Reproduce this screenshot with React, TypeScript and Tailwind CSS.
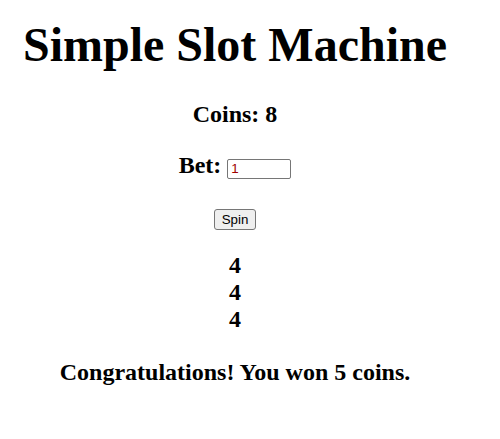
import { useState } from "react"

export default function App() {
  const [coins] = useState(8)
  const [bet, setBet] = useState("1")
  const reels = [4, 4, 4]

  return (
    <div className="w-[470px] bg-white text-center text-black font-['Liberation_Serif','Times_New_Roman',serif]">
      {/* Title */}
      <h1 className="pt-[18px] text-[48px] leading-[53px] font-bold">Simple Slot Machine</h1>

      {/* Coins */}
      <h2 className="mt-[30px] text-[24px] leading-[27px] font-bold">Coins: {coins}</h2>

      {/* Bet */}
      <h2 className="mt-[24px] text-[24px] leading-[27px] font-bold">
        Bet:{" "}
        <input
          type="number"
          value={bet}
          onChange={(e) => setBet(e.target.value)}
          className="h-[20px] w-[64px] rounded-[2px] border border-[#767676] px-[3px] align-baseline text-[13.33px] font-normal text-[#a00000] font-['Liberation_Sans',Arial,sans-serif] [appearance:textfield] [&::-webkit-inner-spin-button]:appearance-none"
        />
      </h2>

      {/* Spin button */}
      <div className="mt-[30px] flex justify-center">
        <button className="h-[21px] w-[42px] rounded-[3px] border border-[#767676] bg-[#efefef] text-[13.33px] leading-[15px] text-black font-['Liberation_Sans',Arial,sans-serif]">
          Spin
        </button>
      </div>

      {/* Reels */}
      <div className="mt-[22px] flex flex-col text-[24px] leading-[27px] font-bold">
        {reels.map((r, i) => (
          <span key={i}>{r}</span>
        ))}
      </div>

      {/* Result */}
      <h2 className="mt-[26px] text-[24px] leading-[27px] font-bold">Congratulations! You won 5 coins.</h2>
    </div>
  )
}
